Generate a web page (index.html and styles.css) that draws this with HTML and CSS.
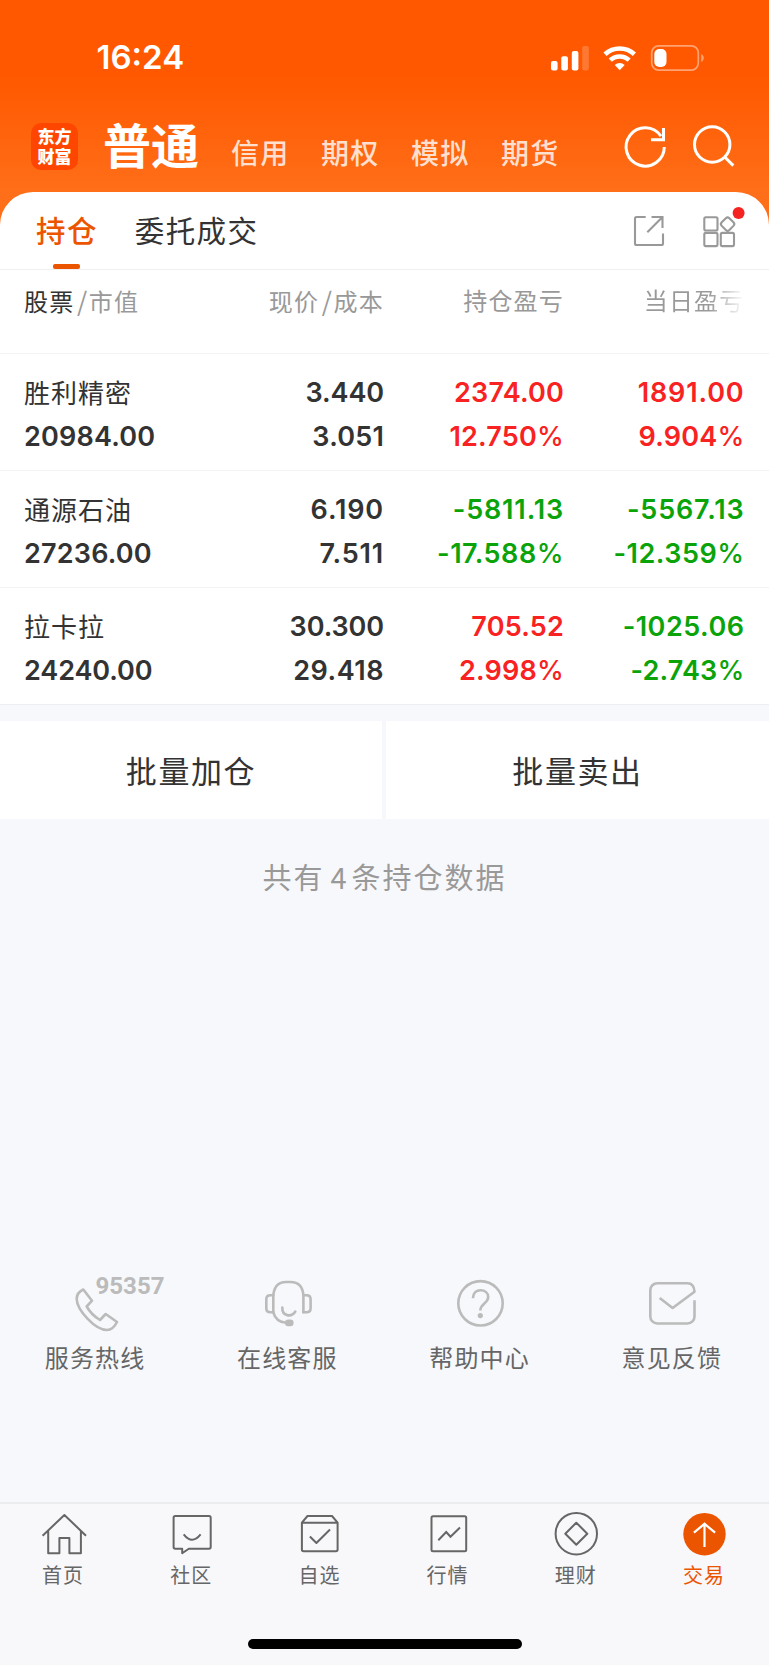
FILE: index.html
```html
<!DOCTYPE html>
<html lang="zh-CN">
<head>
<meta charset="utf-8">
<title>持仓</title>
<link rel="stylesheet" href="styles.css">
</head>
<body>
<div class="app">
  <div class="status">
    <span class="clock">16:24</span>
    <svg class="status-icons" width="156" height="30" viewBox="550 42 156 30">
      <g fill="#fff">
        <rect x="551" y="60" width="6.6" height="9.5" rx="2"/>
        <rect x="561.3" y="55.2" width="6.6" height="14.3" rx="2"/>
        <rect x="571.8" y="50" width="6.6" height="19.5" rx="2"/>
        <rect x="582.2" y="45" width="6.6" height="24.5" rx="2" opacity=".2"/>
      </g>
      <g fill="none" stroke="#fff" stroke-width="4.6">
        <path d="M605 53.2a21.6 21.6 0 0 1 29.4 0"/>
        <path d="M610.3 59.2a13.6 13.6 0 0 1 18.8 0"/>
      </g>
      <path d="M619.7 69.2l-5-5.2a7.5 7.5 0 0 1 10 0z" fill="#fff"/>
      <rect x="651.7" y="44.9" width="46.6" height="24.2" rx="7" fill="none" stroke="#fff" stroke-opacity=".45" stroke-width="1.7"/>
      <path d="M701.2 53.3c3.4 1.2 3.4 6.4 0 7.6z" fill="#fff" opacity=".45"/>
      <rect x="654.3" y="48" width="12.2" height="18" rx="5" fill="#fff"/>
    </svg>
  </div>

  <header class="header">
    <div class="logo">东方<br>财富</div>
    <h1 class="account">普通</h1>
    <nav class="accounts"><span>信用</span><span>期权</span><span>模拟</span><span>期货</span></nav>
    <svg class="header-icons" width="112" height="46" viewBox="623 122 112 46" fill="none" stroke="#fff" stroke-width="3">
      <path d="M664.300 147a19.100 19.100 0 1 1-3.300-10.800"/>
      <path d="M663.500 128v11.700H651"/>
      <circle cx="712.200" cy="144.500" r="17.700"/>
      <path d="M724.500 156.800l8.800 8.800"/>
    </svg>
  </header>

  <main class="card">
    <div class="tabs">
      <span class="tab active">持仓</span>
      <span class="tab">委托成交</span>
      <svg class="tab-icons" width="116" height="48" viewBox="632 204 116 48" fill="none" stroke="#999" stroke-width="2.100">
        <path d="M645.700 217h-9.200q-1.500 0-1.500 1.500v25q0 1.500 1.500 1.500h25q1.500 0 1.500-1.500V233.500"/>
        <path d="M651.500 217h11v11M662.500 217L647.300 232.200"/>
        <rect x="704.300" y="217.300" width="13.200" height="13.200" rx="1.500"/>
        <rect x="704.300" y="232.900" width="13.200" height="13.200" rx="1.500"/>
        <rect x="720.800" y="232.900" width="13.200" height="13.200" rx="1.500"/>
        <rect x="722.200" y="218.700" width="10.800" height="10.800" rx="2.500" transform="rotate(45 727.600 224.100)"/>
        <circle cx="738.600" cy="213" r="6" fill="#f52222" stroke="none"/>
      </svg>
    </div>

    <div class="grid thead">
      <span><b>股票</b><i>/</i>市值</span>
      <span>现价<i>/</i>成本</span>
      <span>持仓盈亏</span>
      <span class="fade">当日盈亏</span>
    </div>
    <div class="grid row">
      <div><p class="name">胜利精密</p><p>20984.00</p></div>
      <div><p class="tight">3.440</p><p>3.051</p></div>
      <div class="up"><p>2374.00</p><p>12.750<em>%</em></p></div>
      <div class="up"><p class="loose">1891.00</p><p>9.904<em>%</em></p></div>
    </div>
    <div class="grid row">
      <div><p class="name">通源石油</p><p>27236.00</p></div>
      <div><p class="loose">6.190</p><p class="loose">7.511</p></div>
      <div class="down"><p class="loose">-5811.13</p><p class="wide">-17.588<em>%</em></p></div>
      <div class="down"><p class="loose">-5567.13</p><p class="wide">-12.359<em>%</em></p></div>
    </div>
    <div class="grid row">
      <div><p class="name">拉卡拉</p><p class="tight">24240.00</p></div>
      <div><p class="tight">30.300</p><p class="wide">29.418</p></div>
      <div class="up"><p>705.52</p><p>2.998<em>%</em></p></div>
      <div class="down"><p class="wide">-1025.06</p><p>-2.743<em>%</em></p></div>
    </div>
  </main>

  <section class="lower">
    <div class="batch"><button>批量加仓</button><button>批量卖出</button></div>
    <p class="count">共有<span>4</span>条持仓数据</p>
    <div class="services">
      <div class="service">
        <svg viewBox="0 0 192 64" width="192" height="64" fill="none" stroke="#bbb" stroke-width="2.600" stroke-linejoin="round">
          <path d="M83.300 17.500L92 28.700 86.700 34.500Q91.500 43 100 48L105.700 42 117 50Q113 58 107 58C95 58 77 38 76.700 27 76.700 22 80 19 83.300 17.500z"/>
          <text class="hotline" x="95.500" y="21.600" textLength="69" lengthAdjust="spacingAndGlyphs">95357</text>
        </svg>
        <span>服务热线</span>
      </div>
      <div class="service">
        <svg viewBox="0 0 192 64" width="192" height="64" fill="none" stroke="#bbb" stroke-width="2.600" stroke-linejoin="round" stroke-linecap="round">
          <path d="M81.300 40.300V23.500Q82.500 10 94 10h4.500Q110.500 10 111.400 23.500V40.300"/>
          <path d="M81.300 23.300h-3q-4 0-4 4v9q0 4 4 4h3M111.400 23.300h3.200q4 0 4 4v9q0 4-4 4h-3.200"/>
          <path d="M81.300 40.300Q84 50 94 50.700M90.300 35.500C90 44.500 99.500 45.500 103.300 39.500"/>
          <rect x="93" y="47.600" width="8.600" height="6.600" rx="3.200" fill="#bbb" stroke="none"/>
        </svg>
        <span>在线客服</span>
      </div>
      <div class="service">
        <svg viewBox="0 0 192 64" width="192" height="64" fill="none" stroke="#bbb" stroke-width="2.600">
          <circle cx="95.500" cy="31.300" r="22.200"/>
          <path d="M87.900 26.300C88 21 91.500 18.200 95.600 18.200 100 18.200 103.200 21 103.200 25 103.200 31.500 95.300 31.500 95.300 38.500"/>
          <circle cx="95.300" cy="43.600" r="2.600" fill="#bbb" stroke="none"/>
        </svg>
        <span>帮助中心</span>
      </div>
      <div class="service">
        <svg viewBox="0 0 192 64" width="192" height="64" fill="none" stroke="#bbb" stroke-width="2.600" stroke-linejoin="round">
          <path d="M117.500 28.200V44.500a7 7 0 0 1-7 7H80.300a7 7 0 0 1-7-7V18.200a7 7 0 0 1 7-7h30.200q6.500 0 7 8.500L95.600 36 82.700 26"/>
        </svg>
        <span>意见反馈</span>
      </div>
    </div>
  </section>

  <footer class="tabbar">
    <div class="item">
      <svg viewBox="0 0 128 56" width="128" height="56" fill="none" stroke="#666" stroke-width="2">
        <path d="M42.600 31.700L64.400 11 86 31.700M48.200 27V49.200H59.400V34H69.400V49.200H80.900V27" stroke-linejoin="round"/>
      </svg><span>首页</span>
    </div>
    <div class="item">
      <svg viewBox="0 0 128 56" width="128" height="56" fill="none" stroke="#666" stroke-width="2" stroke-linejoin="round">
        <path d="M47.300 12H81Q82.700 12 82.700 13.700V43Q82.700 44.700 81 44.700H60.800L54.200 49.300V44.700H47.300Q45.600 44.700 45.600 43V13.700Q45.600 12 47.300 12z"/>
        <path d="M55.700 30.300Q64 41 72.600 30.300"/>
      </svg><span>社区</span>
    </div>
    <div class="item">
      <svg viewBox="0 0 128 56" width="128" height="56" fill="none" stroke="#666" stroke-width="2" stroke-linejoin="round">
        <path d="M45.900 18.700L51.500 12H76L81.600 18.700V45.600Q81.600 47.300 79.900 47.300H47.600Q45.900 47.300 45.900 45.600zH81.600M53.900 32.500L60.400 39 74 25.500"/>
      </svg><span>自选</span>
    </div>
    <div class="item">
      <svg viewBox="0 0 128 56" width="128" height="56" fill="none" stroke="#666" stroke-width="2">
        <rect x="46.500" y="12.200" width="34.700" height="35" rx="1.500"/>
        <path d="M53.300 36.200L61.200 28 65.500 32.700 75 23.500"/>
      </svg><span>行情</span>
    </div>
    <div class="item">
      <svg viewBox="0 0 128 56" width="128" height="56" fill="none" stroke="#666" stroke-width="2" stroke-linejoin="round">
        <circle cx="63.300" cy="29.700" r="20.700"/>
        <path d="M63.300 18.700l11 11-11 11-11-11z"/>
      </svg><span>理财</span>
    </div>
    <div class="item current">
      <svg viewBox="0 0 128 56" width="128" height="56" fill="none" stroke="#fff" stroke-width="2.200">
        <circle cx="63.500" cy="30.200" r="21.200" fill="#ec5500" stroke="none"/>
        <path d="M63.500 19.500V43M52.900 28.700L63.500 19.800 74.100 28.700"/>
      </svg><span>交易</span>
    </div>
    <div class="home-bar"></div>
  </footer>
</div>
</body>
</html>
```
FILE: styles.css
```css
* { box-sizing: border-box; margin: 0; padding: 0; }

body {
  width: 769px;
  height: 1665px;
  overflow: hidden;
  background: #f7f8fb;
  font-family: "Noto Sans CJK SC", sans-serif;
  color: #333;
}

svg { display: block; flex: none; overflow: visible; }
i, em { font-style: normal; }

.app {
  display: flex;
  flex-direction: column;
  height: 1665px;
  background: linear-gradient(#ff5800 75px, #ff6e18 190px) no-repeat 0 0 / 100% 240px;
}

/* Status bar */
.status {
  display: flex;
  justify-content: space-between;
  align-items: center;
  height: 115px;
  padding: 0 63px 0 96.500px;
}
.clock {
  padding-bottom: 1px;
  font: 600 33px/40px Inter, sans-serif;
  color: #fff;
}

/* Account header */
.header {
  display: flex;
  align-items: flex-start;
  height: 76.500px;
  padding: 7px 34px 0 31px;
  color: #fff;
}
.logo {
  width: 47px;
  height: 47px;
  margin-top: 1px;
  padding-top: 3px;
  border-radius: 10px;
  background: #ff4600;
  text-align: center;
  font-weight: 900;
  font-size: 17px;
  line-height: 20px;
}
.account {
  margin-left: 25px;
  font-size: 48px;
  font-weight: 700;
  line-height: 42px;
}
.accounts {
  display: flex;
  margin: 14px 0 0 32px;
  font-size: 28px;
  font-weight: 500;
  line-height: 32px;
  letter-spacing: 1.300px;
  color: #ffdfcd;
}
.accounts span { width: 90px; }
.header-icons { margin-left: auto; }

/* Card with positions */
.card {
  border-radius: 33px 33px 0 0;
  background: #fff;
}
.tabs {
  display: flex;
  height: 78px;
  padding: 0 21px 0 36px;
  border-bottom: 1px solid #f0f0f2;
  font-size: 29.500px;
  line-height: 75px;
  letter-spacing: 1.400px;
}
.tab { position: relative; margin-right: 37px; }
.active { color: #ec5500; font-weight: 500; }
.active::after {
  content: "";
  position: absolute;
  left: 17px;
  bottom: 0;
  width: 27px;
  height: 5px;
  border-radius: 2px;
  background: #ec5500;
}
.tab-icons { margin: 12px 0 0 auto; }

.grid {
  display: grid;
  grid-template-columns: 180px 180px 180px 180.500px;
  padding: 0 24px;
}
.grid > :not(:first-child) { text-align: right; }

.thead {
  height: 84px;
  padding-top: 12.500px;
  border-bottom: 1px solid #f2f3f5;
  font-size: 24px;
  line-height: 36px;
  letter-spacing: 1.200px;
  color: #999;
}
.thead b { font-weight: 400; color: #333; }
.thead i { margin: 0 .500px 0 2.500px; }
.thead i { font-size: 26px; }
.thead .fade {
  background: linear-gradient(90deg, #999 80%, #f6f6f6 98%);
  -webkit-background-clip: text;
  background-clip: text;
  color: transparent;
}

.row {
  height: 117.300px;
  padding-top: 17px;
  border-bottom: 1px solid #f2f3f5;
  font: 600 27px/44.300px Inter, sans-serif;
  letter-spacing: .200px;
}
.row:last-child { border-color: #eceef1; }
.row .name {
  margin-top: -1px;
  margin-bottom: 1px;
  font: 400 26px/44.300px "Noto Sans CJK SC", sans-serif;
  letter-spacing: 1px;
}
.row em { font-weight: 500; }
.row .tight { letter-spacing: -.100px; }
.row .wide { letter-spacing: .500px; }
.row .loose { letter-spacing: .850px; }
.up { color: #f82222; }
.down { color: #0aa30a; }

/* Batch actions and services */
.lower {
  display: flex;
  flex-direction: column;
  flex: 1;
  padding-top: 15.500px;
  background: #f7f8fb;
}
.batch {
  display: grid;
  grid-template-columns: 382px 1fr;
  gap: 4px;
}
.batch button {
  height: 98px;
  border: 0;
  background: #fff;
  font: 400 31px/97px "Noto Sans CJK SC", sans-serif;
  letter-spacing: 1.600px;
  color: #333;
}
.count {
  margin-top: 35px;
  text-align: center;
  font-size: 29px;
  line-height: 44px;
  letter-spacing: 2px;
  color: #999;
}
.count span { margin: 0 3px 0 6px; }
.services {
  display: grid;
  grid-template-columns: repeat(4, 1fr);
  margin-top: auto;
  padding-bottom: 124px;
}
.service {
  display: flex;
  flex-direction: column;
  align-items: center;
  font-size: 24px;
  line-height: 42px;
  letter-spacing: 1.200px;
  color: #666;
}
.service span { margin-right: 2px; }
.hotline {
  font: 700 24.500px Roboto, sans-serif;
  letter-spacing: 0;
  fill: #bbb;
  stroke: none;
}

/* Bottom navigation */
.tabbar {
  display: grid;
  grid-template-columns: repeat(6, 1fr);
  grid-template-rows: 133px 10px;
  height: 163px;
  border-top: 2px solid #ebecee;
  background: #f8f8fb;
}
.item {
  display: flex;
  flex-direction: column;
  align-items: center;
  font-size: 20px;
  line-height: 29px;
  letter-spacing: 1px;
  color: #666;
}
.item span { margin-right: 2px; }
.current { color: #ec5500; }
.home-bar {
  grid-column: 1 / -1;
  justify-self: center;
  width: 274px;
  margin-top: 2px;
  height: 10px;
  border-radius: 5px;
  background: #000;
}
```
